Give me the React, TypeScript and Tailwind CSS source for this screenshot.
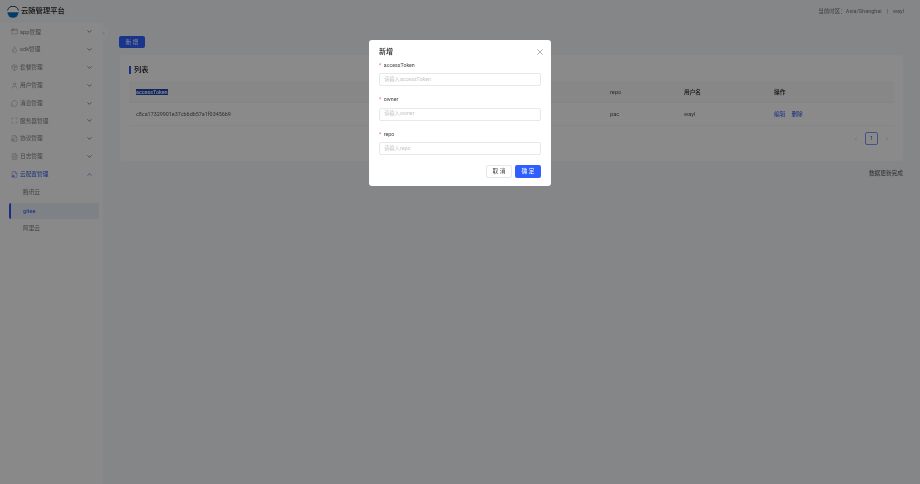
import { AppWindow, Flame, Package, User, MessageCircle, Scan, FileBox, FileText, FileCog, ChevronDown, ChevronUp, ChevronLeft, ChevronRight, X } from "lucide-react";

const menu = [
  { label: "app管理", icon: AppWindow },
  { label: "sdk管理", icon: Flame },
  { label: "套餐管理", icon: Package },
  { label: "用户管理", icon: User },
  { label: "消息管理", icon: MessageCircle },
  { label: "服务器管理", icon: Scan },
  { label: "协议管理", icon: FileBox },
  { label: "日志管理", icon: FileText },
];

const fields = ["accessToken", "owner", "repo"];

const rowClass = "grid grid-cols-[244px_230px_74px_90px_1fr] items-center border-b border-[#f2f2f2] pt-[1px]";

function Logo() {
  return (
    <svg width="12" height="12" viewBox="0 0 12 12">
      <circle cx="6" cy="6" r="5.6" fill="#fff" />
      <path d="M.4 6.2a5.6 5.6 0 0 0 11.2 0z" fill="#0a6fc2" />
      <path d="M.6 4.4a5.6 5.6 0 0 1 10.8 0" fill="none" stroke="#333" strokeWidth="1" />
    </svg>
  );
}

function Sidebar() {
  return (
    <aside className="relative w-[103px] shrink-0 bg-[#f9f9fa]">
      {menu.map((m) => (
        <div key={m.label} className="flex h-[17.8px] items-center pl-[11px] pr-[10px] text-[#808080]">
          <m.icon size={7} strokeWidth={1.2} />
          <span className="ml-[2px] flex-1 text-[5.7px]">{m.label}</span>
          <ChevronDown size={7} strokeWidth={2} className="text-[#444]" />
        </div>
      ))}
      <div className="flex h-[17.8px] items-center pl-[11px] pr-[10px] text-[#2f54eb]">
        <FileCog size={7} strokeWidth={1.2} />
        <span className="ml-[2px] flex-1 text-[5.7px]">云配置管理</span>
        <ChevronUp size={7} strokeWidth={2} />
      </div>
      <div className="flex h-[18px] items-center pl-[23px] text-[5.7px] text-[#777]">腾讯云</div>
      <div className="ml-[9px] mr-[4px] mt-[1.8px] flex h-[16px] items-center rounded-[2px] border-l-2 border-[#2f54eb] bg-[#e6ebf5] pl-[12px] text-[5.7px] text-[#2f54eb]">
        gitee
      </div>
      <div className="mt-[0.5px] flex h-[18px] items-center pl-[23px] text-[5.7px] text-[#777]">阿里云</div>
      <div className="absolute right-[-5px] top-[5px] flex size-[10px] items-center justify-center rounded-full bg-[#f9f9fa] text-[#999]">
        <ChevronLeft size={5} />
      </div>
    </aside>
  );
}

function Table() {
  return (
    <div className="mx-[9px] text-[5.7px] text-[#555]">
      <div className={`${rowClass} h-[22px] bg-[#f6f6f6] font-medium text-[#222]`}>
        <span className="pl-[7px] text-[5.4px]"><span className="bg-[#1c4ab0] text-white">accessToken</span></span>
        <span />
        <span className="pl-[7px] font-normal text-[#555]">repo</span>
        <span className="pl-[7px]">用户名</span>
        <span className="pl-[7px]">操作</span>
      </div>
      <div className={`${rowClass} h-[22.5px]`}>
        <span className="pl-[7px] text-[5.4px]">c8ca17329901e37cb6db57a1f03456b9</span>
        <span />
        <span className="pl-[7px]">pac</span>
        <span className="pl-[7px]">wayl</span>
        <span className="flex gap-[6px] pl-[7px] text-[#2f54eb]">
          <span>编辑</span>
          <span>删除</span>
        </span>
      </div>
    </div>
  );
}

function Modal() {
  return (
    <div className="fixed inset-0 flex justify-center bg-black/45 pt-[40px]">
      <div className="h-[146px] w-[182px] rounded-[3px] bg-white px-[10px] pt-[8px]">
        <div className="flex h-[9px] items-center justify-between">
          <span className="text-[7px] font-medium text-[#222]">新增</span>
          <X size={10} strokeWidth={1.8} className="-mr-[3.5px] -mt-[1px] text-[#999]" />
        </div>
        <div className="mt-[3px] flex flex-col gap-[8.5px]">
          {fields.map((f) => (
            <div key={f}>
              <div className="flex h-[13px] items-start pt-[1.5px] text-[5.3px] text-[#444]">
                <span className="mr-[2.5px] text-[#ff4d4f]">*</span>
                {f}
              </div>
              <div className="flex h-[13px] items-center rounded-[2px] border border-[#e8e8e8] pl-[4px] text-[5.3px] text-[#c4c4c4]">
                请输入{f}
              </div>
            </div>
          ))}
        </div>
        <div className="mt-[10px] flex justify-end gap-[3px] text-[5.7px]">
          <div className="flex h-[13px] w-[26px] items-center justify-center rounded-[2px] border border-[#e8e8e8] text-[#444]">取 消</div>
          <div className="flex h-[13px] w-[26px] items-center justify-center rounded-[2px] bg-[#2f5fff] text-white">确 定</div>
        </div>
      </div>
    </div>
  );
}

export default function App() {
  return (
    <div className="flex h-[484px] w-[920px] flex-col overflow-hidden bg-[#f3f4f6] blur-[0.35px] font-['Roboto','Noto_Sans_CJK_SC',sans-serif]">
      <header className="flex h-[23px] shrink-0 items-center justify-between pl-[7px] pr-[16px]">
        <div className="flex items-center gap-[2px]">
          <Logo />
          <span className="text-[7.3px] font-medium text-[#222]">云随管理平台</span>
        </div>
        <div className="flex items-center gap-[5px] text-[5.5px] text-[#777]">
          <span>当前时区：Asia/Shanghai</span>
          <span>|</span>
          <span>wayl</span>
        </div>
      </header>
      <div className="flex flex-1">
        <Sidebar />
        <main className="flex-1 pl-[16px] pr-[17px] pt-[13px]">
          <div className="flex h-[12px] w-[26px] items-center justify-center rounded-[2px] bg-[#2f5fff] text-[5.7px] text-white">新 增</div>
          <section className="ml-[1px] mt-[7px] h-[106px] rounded-[4px] bg-[#fcfcfc]">
            <div className="flex h-[26px] items-center gap-[3px] pl-[9px] pt-[4px]">
              <span className="h-[8px] w-[2px] bg-[#2f54eb]" />
              <span className="text-[7.3px] font-medium text-[#222]">列表</span>
            </div>
            <Table />
            <div className="mt-[6.5px] flex items-center justify-end gap-[6px] pr-[13px] text-[#bbb]">
              <ChevronLeft size={6} />
              <div className="flex size-[13px] items-center justify-center rounded-[2px] border border-[#7f96f0] text-[5.7px] text-[#2f54eb]">1</div>
              <ChevronRight size={6} />
            </div>
          </section>
          <div className="mt-[8px] text-right text-[5.7px] text-[#555]">数据更新完成</div>
        </main>
      </div>
      <Modal />
    </div>
  );
}
